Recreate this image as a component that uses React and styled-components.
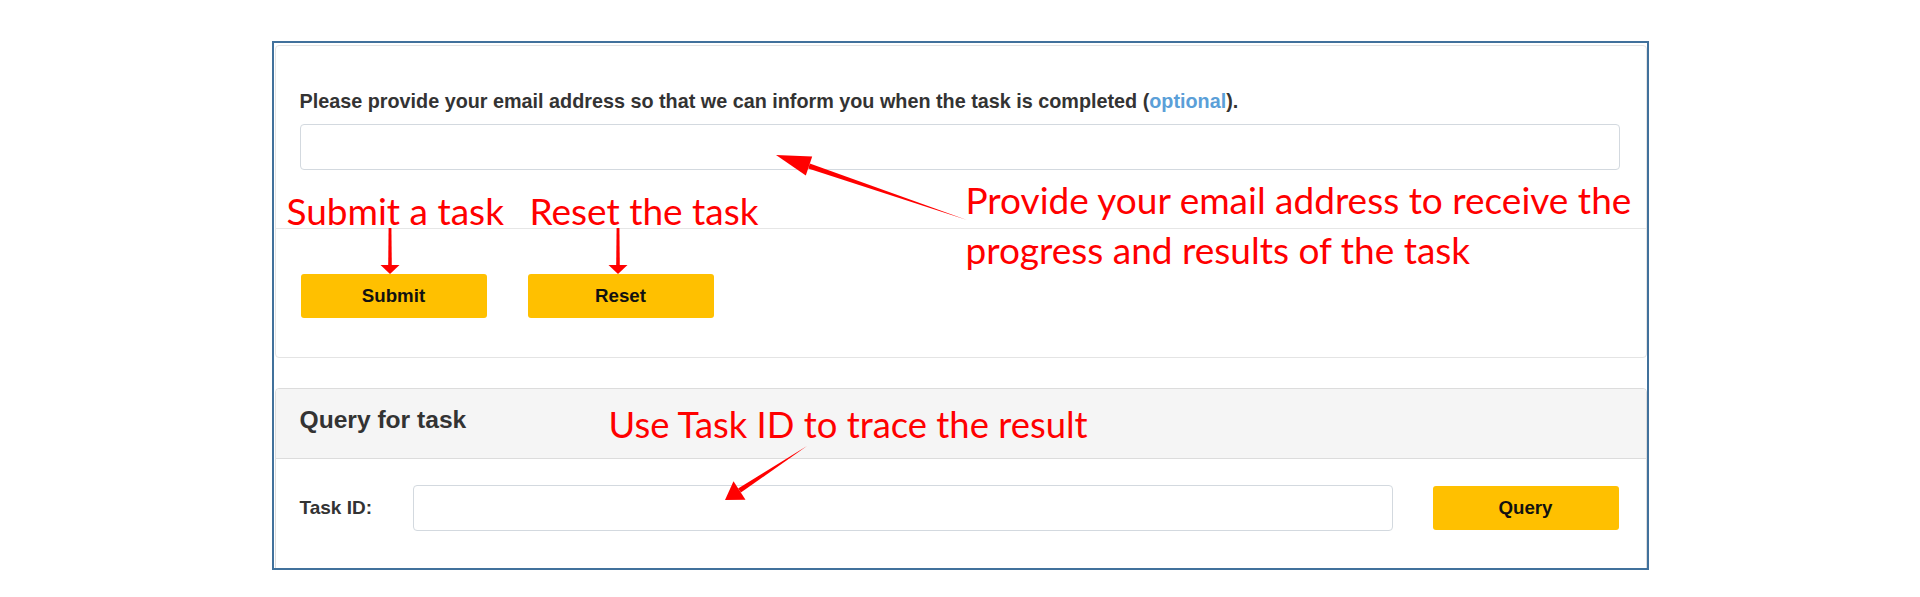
import React from 'react'
import styled, { createGlobalStyle } from 'styled-components'

const GlobalStyle = createGlobalStyle`
  body {
    margin: 0;
    background: #fff;
    font-family: "Liberation Sans", Arial, sans-serif;
  }
`

const Frame = styled.div`
  position: relative;
  width: 1377px;
  height: 529px;
  margin: 41px auto 0;
  padding: 2px 0 0 1px;
  border: 2px solid #41719c;
  box-sizing: border-box;
  overflow: hidden;
`

const Panel = styled.div`
  background: #fff;
  border: 1px solid ${props => props.$dark ? '#dcdcdc' : '#e4e4e4'};
  border-radius: 4px;
  margin-top: ${props => props.$gap || 0}px;
`

const PanelBody = styled.div`
  padding: 42px 26px 58px 24px;
`

const Label = styled.label`
  display: block;
  font-size: 19.8px;
  font-weight: bold;
  line-height: 27px;
  color: #333;
  margin-bottom: 9px;

  a {
    color: #5b9fd8;
    text-decoration: none;
  }
`

const TextInput = styled.input`
  display: block;
  box-sizing: border-box;
  width: 100%;
  height: 46px;
  border: 1px solid #d3d9df;
  border-radius: 4px;
  background: #fff;
  outline: none;
  ${props => props.$grow && 'flex: 1;'}
`

const PanelFooter = styled.div`
  display: flex;
  gap: 41px;
  border-top: 1px solid #e6e6e6;
  padding: 45px 25px 39px;
`

const Button = styled.button`
  width: 186px;
  height: 44px;
  border: none;
  border-radius: 3px;
  background: #ffc000;
  color: #111;
  font-family: "Liberation Sans", Arial, sans-serif;
  font-size: 18.7px;
  font-weight: bold;
  margin-left: ${props => props.$offset || 0}px;
  flex-shrink: 0;
`

const PanelHeading = styled.div`
  background: #f5f5f5;
  border-bottom: 1px solid #dcdcdc;
  border-radius: 4px 4px 0 0;
  padding: 17px 24px 25px;
  font-size: 24.6px;
  font-weight: bold;
  line-height: 27px;
  color: #333;
`

const QueryRow = styled.div`
  display: flex;
  align-items: center;
  padding: 26px 27px 60px 24px;
`

const RowLabel = styled.span`
  width: 113px;
  font-size: 19px;
  font-weight: bold;
  color: #333;
`

const Overlay = styled.svg`
  position: absolute;
  left: 0;
  top: 0;
  pointer-events: none;
`

const Note = styled.div`
  position: absolute;
  left: ${props => props.$x}px;
  top: ${props => props.$y}px;
  font-family: Lato, "Noto Sans", sans-serif;
  font-size: ${props => props.$size || 37}px;
  line-height: 50px;
  color: #ff0000;
  white-space: nowrap;
`

const Arrows = () => (
  <Overlay width="1373" height="525" viewBox="0 0 1373 525">
    <g fill="#ff0000">
      {/* email arrow */}
      <polygon points="502,112 538.2,113.5 531.8,132.5" />
      <polygon points="534.2,125.4 535.8,120.6 693,177" />
      {/* submit arrow */}
      <polygon points="114.6,185 117.4,185 117.8,222 114.2,222" />
      <polygon points="106.5,222 125.5,222 116,231" />
      {/* reset arrow */}
      <polygon points="342.6,185 345.4,185 345.8,222 342.2,222" />
      <polygon points="334.5,222 353.5,222 344,231" />
      {/* task id arrow */}
      <polygon points="451,457 471.5,456.7 459.5,438.3" />
      <polygon points="466.9,449.6 464.1,445.4 533,403" />
    </g>
  </Overlay>
)

export default function App() {
  return (
    <>
      <GlobalStyle />
      <Frame>
        <Panel>
          <PanelBody>
            <Label>
              Please provide your email address so that we can inform you when the task is completed (<a href="#">optional</a>).
            </Label>
            <TextInput type="text" />
          </PanelBody>
          <PanelFooter>
            <Button>Submit</Button>
            <Button>Reset</Button>
          </PanelFooter>
        </Panel>

        <Panel $dark $gap={30}>
          <PanelHeading>Query for task</PanelHeading>
          <QueryRow>
            <RowLabel>Task ID:</RowLabel>
            <TextInput type="text" $grow />
            <Button $offset={40}>Query</Button>
          </QueryRow>
        </Panel>

        <Arrows />
        <Note $x={13} $y={143}>Submit a task</Note>
        <Note $x={256} $y={143}>Reset the task</Note>
        <Note $x={692} $y={132}>
          Provide your email address to receive the<br />progress and results of the task
        </Note>
        <Note $x={335} $y={356} $size={36.4}>Use Task ID to trace the result</Note>
      </Frame>
    </>
  )
}
